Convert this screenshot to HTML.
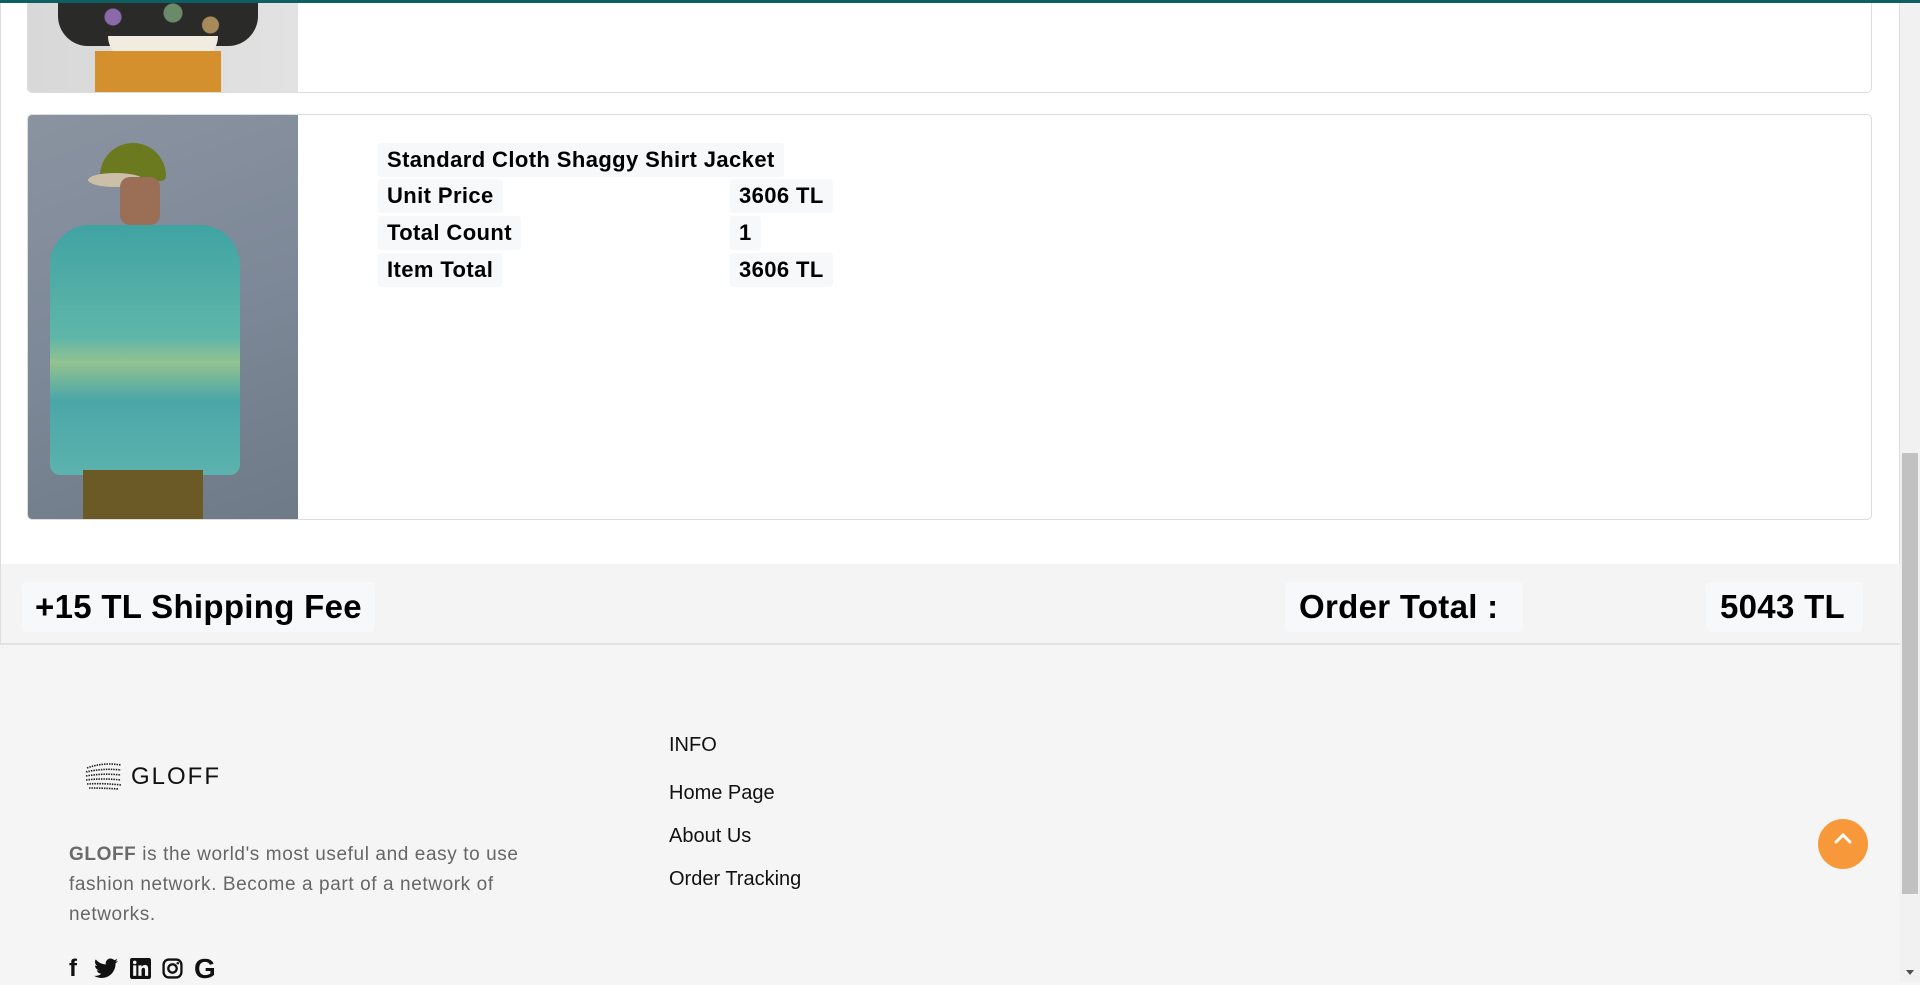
<!DOCTYPE html>
<html><head><meta charset="utf-8"><style>
*{margin:0;padding:0;box-sizing:border-box}
html,body{width:1920px;height:982px;overflow:hidden;background:#f5f5f5;font-family:"Liberation Sans",Arial,sans-serif}
.top{position:absolute;left:0;top:0;width:1920px;height:3px;background:#0d5f63;z-index:5}
.main{position:absolute;left:0;top:3px;width:1900px;height:642px;background:#fff;border-left:1px solid #ddd;border-right:1px solid #ddd}
.card{position:absolute;left:27px;width:1845px;border:1px solid #ddd;border-radius:5px;background:#fff;overflow:hidden}
.img{position:absolute;left:0;top:0;width:270px;height:100%}
.lbl{position:absolute;background:#f7f8fa;border-radius:3px;font-weight:bold;font-size:22px;letter-spacing:0.4px;color:#000;padding:0 9px;height:34px;line-height:34px}
.sum{position:absolute;left:0;top:564px;width:1900px;height:81px;background:#f4f4f4;border-bottom:2px solid #e2e2e2;border-left:1px solid #ddd}
.big{position:absolute;top:18px;height:50px;line-height:50px;background:#f7f8fa;border-radius:4px;font-weight:bold;font-size:33px;letter-spacing:0.3px;color:#000;padding:0 13px}
.foot a{color:#111;text-decoration:none}
.sb{position:absolute;left:1900px;top:0;width:20px;height:982px;background:#f1f1f1}
</style></head><body>
<div class="top"></div>
<div class="main"></div>
<div class="card" style="top:-10px;height:103px">
 <div class="img" style="background:linear-gradient(90deg,#d8d8d8 0,#e2e2e2 100%)">
  <div style="position:absolute;left:30px;top:0;width:200px;height:55px;background:#2a2a28;border-radius:0 0 30px 30px"></div>
  <div style="position:absolute;left:55px;top:10px;width:150px;height:40px;background:radial-gradient(circle at 20% 40%,#8a6aa8 0 8px,transparent 9px),radial-gradient(circle at 60% 30%,#6a8a6a 0 9px,transparent 10px),radial-gradient(circle at 85% 60%,#a88a5a 0 8px,transparent 9px)"></div>
  <div style="position:absolute;left:80px;top:45px;width:110px;height:25px;background:#f0ece0;border-radius:0 0 40px 40px"></div>
  <div style="position:absolute;left:67px;top:60px;width:126px;height:50px;background:#d4902c"></div>
 </div>
</div>
<div class="card" style="top:114px;height:406px">
 <div class="img" style="background:linear-gradient(160deg,#8a93a0,#7d8898 50%,#6f7a88)">
  <div style="position:absolute;left:72px;top:28px;width:66px;height:38px;background:#6b7a1e;border-radius:35px 35px 5px 5px"></div>
  <div style="position:absolute;left:60px;top:58px;width:55px;height:14px;background:#cbbfa8;border-radius:50%"></div>
  <div style="position:absolute;left:92px;top:62px;width:40px;height:48px;background:#9a6f55;border-radius:10px"></div>
  <div style="position:absolute;left:22px;top:110px;width:190px;height:250px;background:linear-gradient(180deg,#3fa3a3,#5fb6a8 45%,#93c290 55%,#4aa7a7 70%,#5cb2ae);border-radius:40px 40px 10px 10px"></div>
  <div style="position:absolute;left:55px;top:355px;width:120px;height:51px;background:#6b5a25"></div>
 </div>
</div>
<div class="lbl" style="left:378px;top:143px">Standard Cloth Shaggy Shirt Jacket</div>
<div class="lbl" style="left:378px;top:179px">Unit Price</div>
<div class="lbl" style="left:730px;top:179px">3606 TL</div>
<div class="lbl" style="left:378px;top:216px">Total Count</div>
<div class="lbl" style="left:730px;top:216px">1</div>
<div class="lbl" style="left:378px;top:253px">Item Total</div>
<div class="lbl" style="left:730px;top:253px">3606 TL</div>
<div class="sum">
 <div class="big" style="left:21px">+15 TL Shipping Fee</div>
 <div class="big" style="left:1284px;width:238px;padding-left:14px">Order Total :</div>
 <div class="big" style="left:1705px;width:157px;padding-left:14px">5043 TL</div>
</div>
<div class="foot">
 <svg style="position:absolute;left:85px;top:762px" width="38" height="28" viewBox="0 0 38 28"><g stroke="#222" stroke-width="1.6" stroke-dasharray="1.5 1" fill="none"><path d="M2 6 Q18 0 36 3"/><path d="M1 10 Q18 6 36 8"/><path d="M1 14 Q18 11 36 13"/><path d="M1 18 Q18 16 36 18"/><path d="M2 22 Q18 21 36 23"/><path d="M4 26 Q18 26 34 27"/></g></svg>
 <div style="position:absolute;left:131px;top:763px;font-size:24px;letter-spacing:2px;color:#111">GLOFF</div>
 <div style="position:absolute;left:69px;top:840px;width:520px;font-size:19px;line-height:30px;color:#666;letter-spacing:0.6px"><b style="color:#6a6a6a">GLOFF</b> is the world's most useful and easy to use<br>fashion network. Become a part of a network of<br>networks.</div>
 <div style="position:absolute;left:69px;top:955px;width:160px;height:30px;font-size:24px;font-weight:bold;color:#111">
  <span style="position:absolute;left:0;top:0">f</span>
  <svg style="position:absolute;left:25px;top:3px" width="24" height="21" viewBox="0 0 24 20"><path fill="#111" d="M24 2.4a10 10 0 0 1-2.8.8A5 5 0 0 0 23.3.4a10 10 0 0 1-3.1 1.2A4.9 4.9 0 0 0 11.8 6 14 14 0 0 1 1.7.9a4.9 4.9 0 0 0 1.5 6.6A4.9 4.9 0 0 1 1 6.9a4.9 4.9 0 0 0 3.9 4.8 5 5 0 0 1-2.2.1 4.9 4.9 0 0 0 4.6 3.4A9.9 9.9 0 0 1 0 17.3 14 14 0 0 0 7.5 19.5c9 0 14-7.5 14-14v-.6A10 10 0 0 0 24 2.4z"/></svg>
  <svg style="position:absolute;left:61px;top:3px" width="21" height="21" viewBox="0 0 20 20"><rect width="20" height="20" rx="2" fill="#111"/><rect x="3" y="7" width="3" height="10" fill="#f5f5f5"/><circle cx="4.5" cy="4.2" r="1.7" fill="#f5f5f5"/><path d="M8 7h3v1.5c.6-1 1.8-1.8 3.3-1.8 2.4 0 3 1.6 3 4V17h-3v-5.5c0-1.3-.3-2.2-1.5-2.2S11 10.2 11 11.5V17H8z" fill="#f5f5f5"/></svg>
  <svg style="position:absolute;left:93px;top:3px" width="21" height="21" viewBox="0 0 20 20"><rect x="1.5" y="1.5" width="17" height="17" rx="5" fill="none" stroke="#111" stroke-width="2.2"/><circle cx="10" cy="10" r="4" fill="none" stroke="#111" stroke-width="2.2"/><circle cx="15" cy="5" r="1.2" fill="#111"/></svg>
  <span style="position:absolute;left:125px;top:-2px;font-size:28px">G</span>
 </div>
 <div style="position:absolute;left:669px;top:734px;font-size:20px;color:#111">INFO</div>
 <a style="position:absolute;left:669px;top:782px;font-size:20px">Home Page</a>
 <a style="position:absolute;left:669px;top:825px;font-size:20px">About Us</a>
 <a style="position:absolute;left:669px;top:868px;font-size:20px">Order Tracking</a>
</div>
<div style="position:absolute;left:1818px;top:819px;width:50px;height:50px;border-radius:50%;background:#f7993a"></div>
<svg style="position:absolute;left:1833px;top:831px" width="20" height="14" viewBox="0 0 20 14"><path d="M3 11 L10 4 L17 11" stroke="#fff" stroke-width="3" fill="none" stroke-linecap="round"/></svg>
<div class="sb"><div style="position:absolute;left:2px;top:453px;width:16px;height:441px;background:#c1c1c1"></div>
<div style="position:absolute;left:6px;top:970px;border-left:4px solid transparent;border-right:4px solid transparent;border-top:5px solid #505050"></div></div>
</body></html>
